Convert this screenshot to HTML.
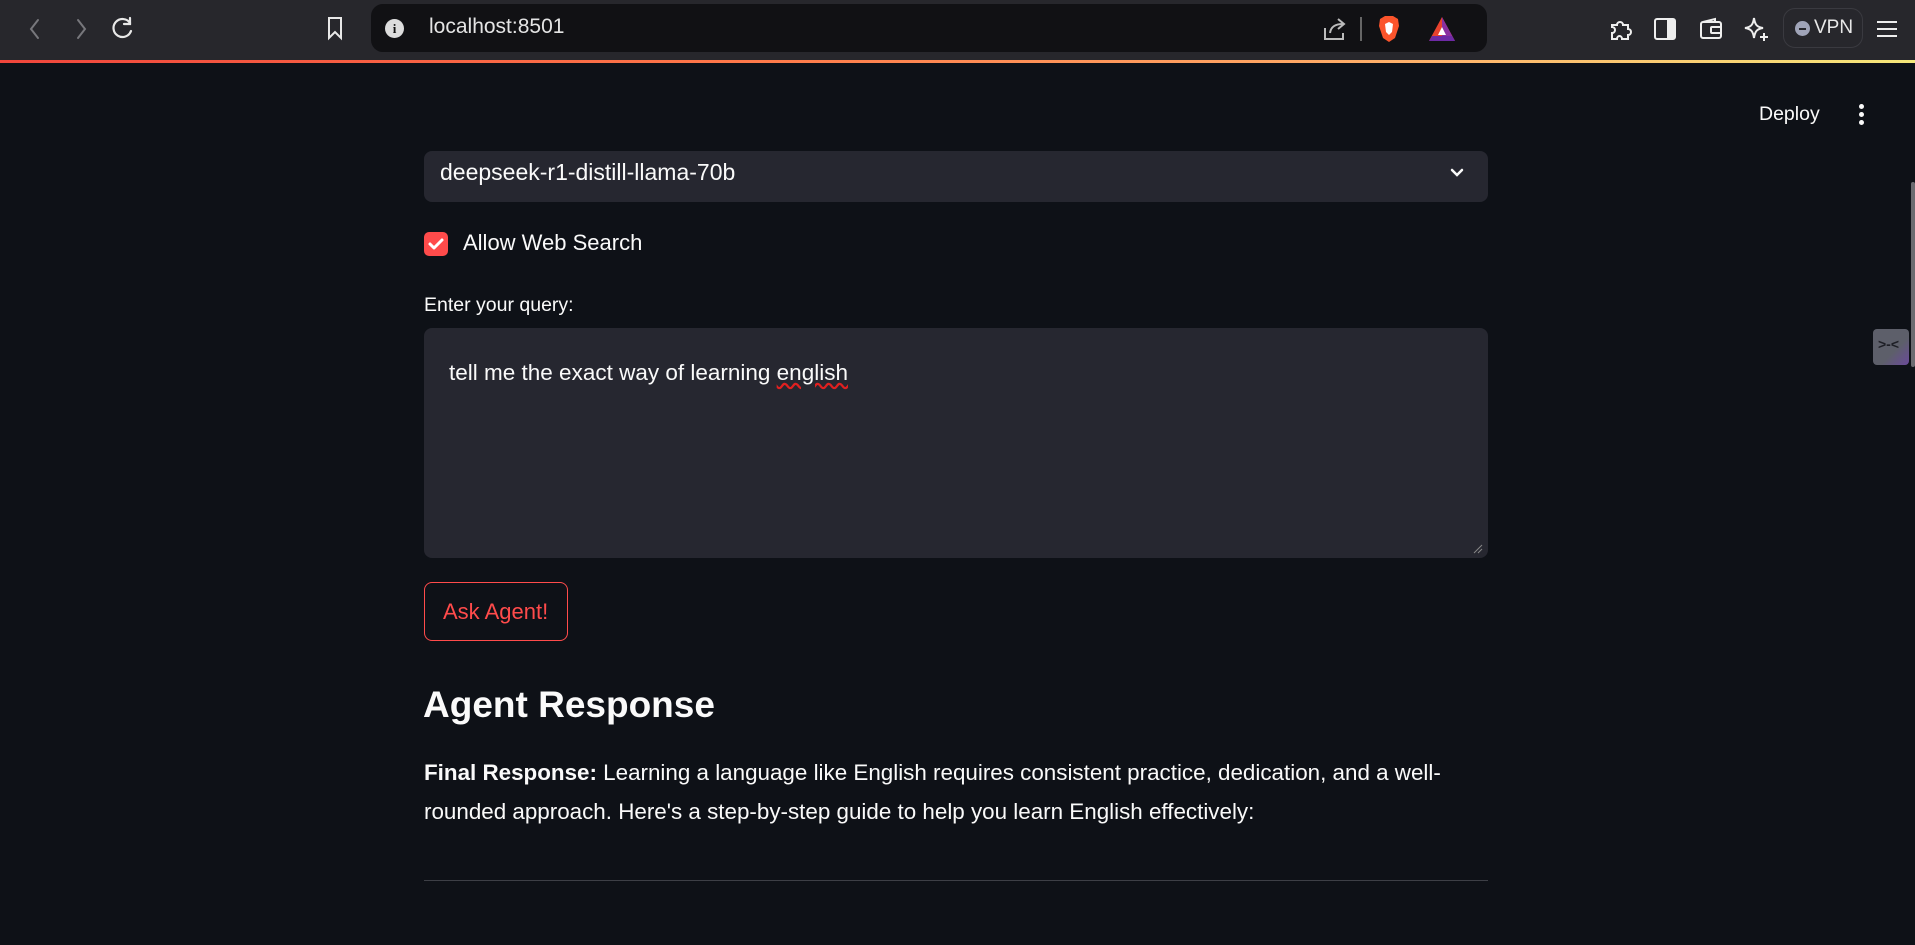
<!DOCTYPE html>
<html><head><meta charset="utf-8"><style>
*{box-sizing:border-box;margin:0;padding:0}
body{width:1915px;height:945px;background:#0e1117;color:#fafafa;font-family:"Liberation Sans",sans-serif;position:relative;overflow:hidden}
.abs{position:absolute}
.bar{left:0;top:0;width:1915px;height:60px;background:#27272c}
.grad{left:0;top:60px;width:1915px;height:3px;background:linear-gradient(90deg,#f0463c,#ff7a4a 40%,#ffb36b 75%,#f5e87a)}
.url{left:371px;top:4px;width:1116px;height:48px;background:#111114;border-radius:12px}
.t{white-space:nowrap}
</style></head><body>
<div class="abs bar"></div>
<div class="abs grad"></div>
<svg class="abs" style="left:24px;top:16px" width="120" height="26" viewBox="0 0 120 26" fill="none" stroke-width="2" stroke-linecap="round">
<path d="M14 4 L7 13 L14 22" stroke="#77777c"/>
<path d="M54 4 L61 13 L54 22" stroke="#77777c"/>
</svg>
<svg class="abs" style="left:110px;top:15px" width="26" height="26" viewBox="0 0 26 26" fill="none" stroke="#e8e8e8" stroke-width="2.2" stroke-linecap="round"><path d="M20 8 A9 9 0 1 0 21 16"/><path d="M20 3 V9 H14"/></svg>
<svg class="abs" style="left:325px;top:15px" width="20" height="26" viewBox="0 0 20 26" fill="none" stroke="#e8e8e8" stroke-width="2"><path d="M4 3 H16 V23 L10 17 L4 23 Z"/></svg>
<div class="abs url"></div>
<div class="abs" style="left:385px;top:19px;width:19px;height:19px;border-radius:50%;background:#ddd;color:#111;font:bold 13px 'Liberation Serif';text-align:center;line-height:19px">i</div>
<div class="abs t" style="left:429px;top:15px;font-size:21px;color:#e4e4e4">localhost:8501</div>
<svg class="abs" style="left:1322px;top:16px" width="26" height="26" viewBox="0 0 26 26" fill="none" stroke="#bbb" stroke-width="2"><path d="M3 12 V23 H21 V17"/><path d="M8 17 C9 10 14 8 21 8"/><path d="M16 3 L22 8 L16 13"/></svg>
<div class="abs" style="left:1360px;top:17px;width:2px;height:24px;background:#666"></div>
<svg class="abs" style="left:1377px;top:14px" width="24" height="30" viewBox="0 0 24 30"><path d="M3 5 L8 2 H16 L21 5 L22 12 L18 24 L12 28 L6 24 L2 12 Z" fill="#fb542b"/><path d="M8 10 L12 8 L16 10 L15 18 L12 21 L9 18 Z" fill="#fff"/></svg>
<svg class="abs" style="left:1428px;top:16px" width="28" height="26" viewBox="0 0 28 26"><path d="M14 1 L27 25 H1 Z" fill="#e8422d"/><path d="M14 1 L27 25 H14 Z" fill="#8a2fa0"/><path d="M1 25 H27 L24 20 H4 Z" fill="#6d2aa5"/><path d="M14 11 L18 19 H10 Z" fill="#fff"/></svg>
<svg class="abs" style="left:1608px;top:16px" width="26" height="26" viewBox="0 0 26 26" fill="none" stroke="#eee" stroke-width="2"><path d="M4 9 H9 C9 5 15 5 15 9 H20 V13 C24 13 24 19 20 19 V23 H14 C14 19 9 19 9 23 H4 V17 C8 17 8 11 4 11 Z"/></svg>
<svg class="abs" style="left:1652px;top:16px" width="26" height="26" viewBox="0 0 26 26"><rect x="3" y="3" width="20" height="20" rx="2" fill="none" stroke="#eee" stroke-width="2"/><rect x="15" y="3" width="8" height="20" fill="#eee"/></svg>
<svg class="abs" style="left:1698px;top:16px" width="26" height="26" viewBox="0 0 26 26" fill="none" stroke="#eee" stroke-width="2"><rect x="3" y="6" width="20" height="16" rx="2"/><path d="M5 6 L17 3 V6"/><rect x="13" y="11" width="10" height="6" rx="1"/></svg>
<svg class="abs" style="left:1742px;top:15px" width="28" height="28" viewBox="0 0 28 28" fill="none" stroke="#eee" stroke-width="2"><path d="M12 3 C13 10 15 12 21 13 C15 14 13 16 12 23 C11 16 9 14 3 13 C9 12 11 10 12 3 Z"/><path d="M22 18 V26 M18 22 H26"/></svg>
<div class="abs" style="left:1783px;top:8px;width:80px;height:40px;border:1px solid #3a3a40;border-radius:12px"></div>
<div class="abs" style="left:1795px;top:21px;width:15px;height:15px;border-radius:50%;background:#a0a4b8"></div>
<div class="abs" style="left:1799px;top:28px;width:7px;height:2px;background:#27272c"></div>
<div class="abs t" style="left:1814px;top:17px;font-size:19px;color:#e8e8e8">VPN</div>
<svg class="abs" style="left:1876px;top:18px" width="22" height="22" viewBox="0 0 22 22" stroke="#eee" stroke-width="2"><path d="M1 4 H21 M1 11 H21 M1 18 H21"/></svg>

<div class="abs t" style="left:1759px;top:103px;font-size:19.5px;color:#fafafa">Deploy</div>
<div class="abs" style="left:1859px;top:104px;width:5px;height:5px;border-radius:50%;background:#fafafa;box-shadow:0 8px 0 #fafafa,0 16px 0 #fafafa"></div>

<div class="abs" style="left:424px;top:151px;width:1064px;height:51px;background:#262730;border-radius:8px"></div>
<div class="abs t" style="left:440px;top:159px;font-size:23px">deepseek-r1-distill-llama-70b</div>
<svg class="abs" style="left:1447px;top:162px" width="20" height="20" viewBox="0 0 20 20" fill="none" stroke="#fafafa" stroke-width="2.5" stroke-linecap="round"><path d="M5 8 L10 13 L15 8"/></svg>

<div class="abs" style="left:424px;top:232px;width:24px;height:24px;background:#ff4b4b;border-radius:5px"></div>
<svg class="abs" style="left:424px;top:232px" width="24" height="24" viewBox="0 0 24 24" fill="none" stroke="#fff" stroke-width="3" stroke-linecap="round" stroke-linejoin="round"><path d="M6 12 L10 16 L18 8"/></svg>
<div class="abs t" style="left:463px;top:230px;font-size:22px">Allow Web Search</div>

<div class="abs t" style="left:424px;top:294px;font-size:19.5px">Enter your query:</div>
<div class="abs" style="left:424px;top:328px;width:1064px;height:230px;background:#262730;border-radius:8px"></div>
<div class="abs t" style="left:449px;top:360px;font-size:22.5px">tell me the exact way of learning <span style="text-decoration:underline wavy #e02020">english</span></div>
<svg class="abs" style="left:1473px;top:544px" width="10" height="10" viewBox="0 0 10 10" stroke="#888" stroke-width="1"><path d="M1 9 L9 1 M5 9 L9 5"/></svg>

<div class="abs" style="left:424px;top:582px;width:144px;height:59px;border:1px solid #ff4b4b;border-radius:8px"></div>
<div class="abs t" style="left:443px;top:599px;font-size:22px;color:#ff4b4b">Ask Agent!</div>

<div class="abs t" style="left:423px;top:684px;font-size:37px;font-weight:bold">Agent Response</div>
<div class="abs t" style="left:424px;top:760px;font-size:22.4px"><b>Final Response:</b> Learning a language like English requires consistent practice, dedication, and a well-</div>
<div class="abs t" style="left:424px;top:799px;font-size:22.4px">rounded approach. Here's a step-by-step guide to help you learn English effectively:</div>
<div class="abs" style="left:424px;top:880px;width:1064px;height:1px;background:#3d3f46"></div>

<div class="abs" style="left:1873px;top:329px;width:36px;height:36px;border-radius:4px;background:linear-gradient(135deg,#5d5f6a 60%,#6a4a9a)"></div>
<div class="abs t" style="left:1878px;top:336px;font-size:14px;color:#1e1f26;font-weight:bold">&gt;-&lt;</div>
<div class="abs" style="left:1911px;top:182px;width:4px;height:185px;background:#6b6b70;border-radius:2px"></div>
</body></html>
